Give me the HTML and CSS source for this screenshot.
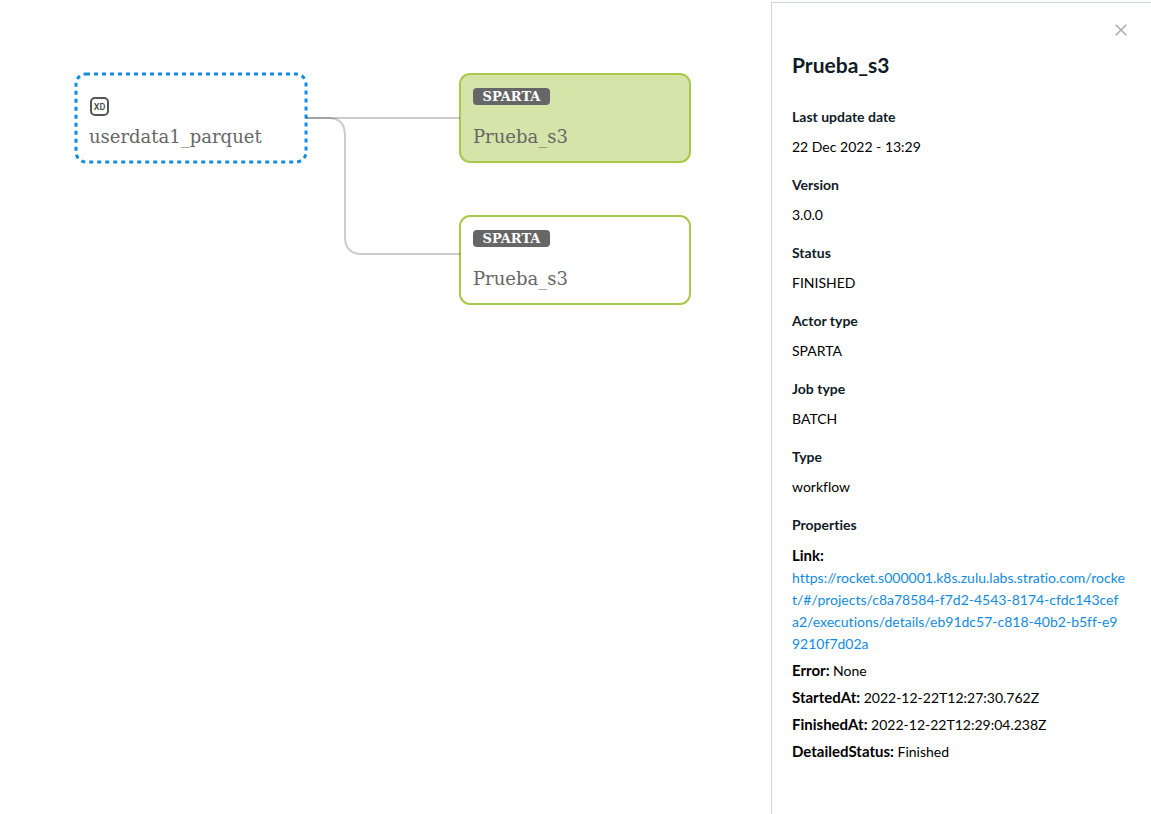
FILE: index.html
```html
<!DOCTYPE html>
<html lang="en">
<head>
<meta charset="utf-8">
<meta name="viewport" content="width=device-width, initial-scale=1">
<title>Prueba_s3</title>
<link rel="stylesheet" href="styles.css">
</head>
<body>
<div class="layout">
  <main class="canvas">
    <svg class="graph" width="700" height="320" role="img" aria-label="Lineage graph">
      <g class="node node-data">
        <rect class="box" x="76" y="74" width="230" height="88" rx="10"/>
        <rect class="icon-frame" x="91" y="98" width="17" height="17" rx="4"/>
        <text class="icon-text" x="99.5" y="110">XD</text>
        <text class="name" x="89" y="143">userdata1_parquet</text>
      </g>
      <g class="node node-actor selected">
        <rect class="box" x="460" y="74" width="230" height="88" rx="10"/>
        <rect class="badge" x="473" y="88" width="77" height="17" rx="4"/>
        <text class="badge-text" x="511.5" y="101">SPARTA</text>
        <text class="name" x="473" y="143">Prueba_s3</text>
      </g>
      <g class="node node-actor">
        <rect class="box" x="460" y="216" width="230" height="88" rx="10"/>
        <rect class="badge" x="473" y="230" width="77" height="17" rx="4"/>
        <text class="badge-text" x="511.5" y="243">SPARTA</text>
        <text class="name" x="473" y="285">Prueba_s3</text>
      </g>
      <path class="edge" d="M306 118H460"/>
      <path class="edge" d="M306 118H328Q345 118 345 135V237Q345 254 362 254H460"/>
    </svg>
  </main>
  <aside class="panel">
    <button class="close" type="button" aria-label="Close">
      <svg width="12" height="12" viewBox="0 0 12 12"><path d="M.7.7 11.3 11.3M11.3.7.7 11.3"/></svg>
    </button>
    <h1 class="title">Prueba_s3</h1>
    <dl class="details">
      <div class="field"><dt>Last update date</dt><dd>22 Dec 2022 - 13:29</dd></div>
      <div class="field"><dt>Version</dt><dd>3.0.0</dd></div>
      <div class="field"><dt>Status</dt><dd>FINISHED</dd></div>
      <div class="field"><dt>Actor type</dt><dd>SPARTA</dd></div>
      <div class="field"><dt>Job type</dt><dd>BATCH</dd></div>
      <div class="field"><dt>Type</dt><dd>workflow</dd></div>
    </dl>
    <h2 class="subtitle">Properties</h2>
    <ul class="properties">
      <li><b>Link:</b> <a class="link" href="https://rocket.s000001.k8s.zulu.labs.stratio.com/rocket/#/projects/c8a78584-f7d2-4543-8174-cfdc143cefa2/executions/details/eb91dc57-c818-40b2-b5ff-e99210f7d02a">https://rocket.s000001.k8s.zulu.labs.stratio.com/rocke<br>t/#/projects/c8a78584-f7d2-4543-8174-cfdc143cef<br>a2/executions/details/eb91dc57-c818-40b2-b5ff-e9<br>9210f7d02a</a></li>
      <li><b>Error:</b> None</li>
      <li><b>StartedAt:</b> 2022-12-22T12:27:30.762Z</li>
      <li><b>FinishedAt:</b> 2022-12-22T12:29:04.238Z</li>
      <li><b>DetailedStatus:</b> Finished</li>
    </ul>
  </aside>
</div>
</body>
</html>
```
FILE: styles.css
```css
* { box-sizing: border-box; }
body {
  margin: 0;
  background: #fff;
  color: #000;
  font: 14px/22px Lato, sans-serif;
  font-variant-ligatures: none;
}
.layout { display: flex; min-height: 100vh; padding-top: 2px; }
.canvas { flex: 1; min-width: 0; overflow: hidden; margin-top: -2px; }
.graph { display: block; }
.box { fill: #fff; stroke-width: 2; }
.node-data .box { stroke: #128be0; stroke-width: 3; stroke-dasharray: 4 4; }
.node-actor .box { stroke: #a8c94b; }
.selected .box { fill: #d5e4a9; }
.name { font: 18px "DejaVu Serif", serif; fill: #666; }
.badge { fill: #666; }
.badge-text { font: bold 13px "DejaVu Serif", serif; fill: #fff; text-anchor: middle; }
.icon-frame { fill: none; stroke: #555; stroke-width: 2; }
.icon-text { font: 500 9px Roboto, sans-serif; fill: #444; text-anchor: middle; }
.edge { fill: none; stroke: #000; stroke-opacity: .2; stroke-width: 2; }

.panel {
  flex: 0 0 380px;
  display: flex;
  flex-direction: column;
  border: solid #cbd3de;
  border-width: 1px 0 0 1px;
  padding: 15px 20px;
}
.close {
  align-self: flex-end;
  display: flex;
  padding: 6px;
  margin-right: -2px;
  border: 0;
  background: none;
  cursor: pointer;
}
.close path { fill: none; stroke: #aaa; stroke-width: 1.5; }
.title { margin: 9px 0 27px; font-size: 21px; line-height: 28px; font-weight: 700; color: #0f1b27; }
.details { display: flex; flex-direction: column; gap: 16px; margin: 0 0 16px; }
.field { display: flex; flex-direction: column; gap: 8px; }
dt, .subtitle { margin: 0; font-size: 14px; line-height: 22px; font-weight: 700; color: #0f1b27; }
dd { margin: 0; }
.properties {
  display: flex;
  flex-direction: column;
  gap: 4px;
  margin: 8px 0 0;
  padding: 0;
  list-style: none;
}
.properties b { font-size: 15px; }
.link {
  display: block;
  color: #128be0;
  text-decoration: none;
  overflow-wrap: anywhere;
}
```
